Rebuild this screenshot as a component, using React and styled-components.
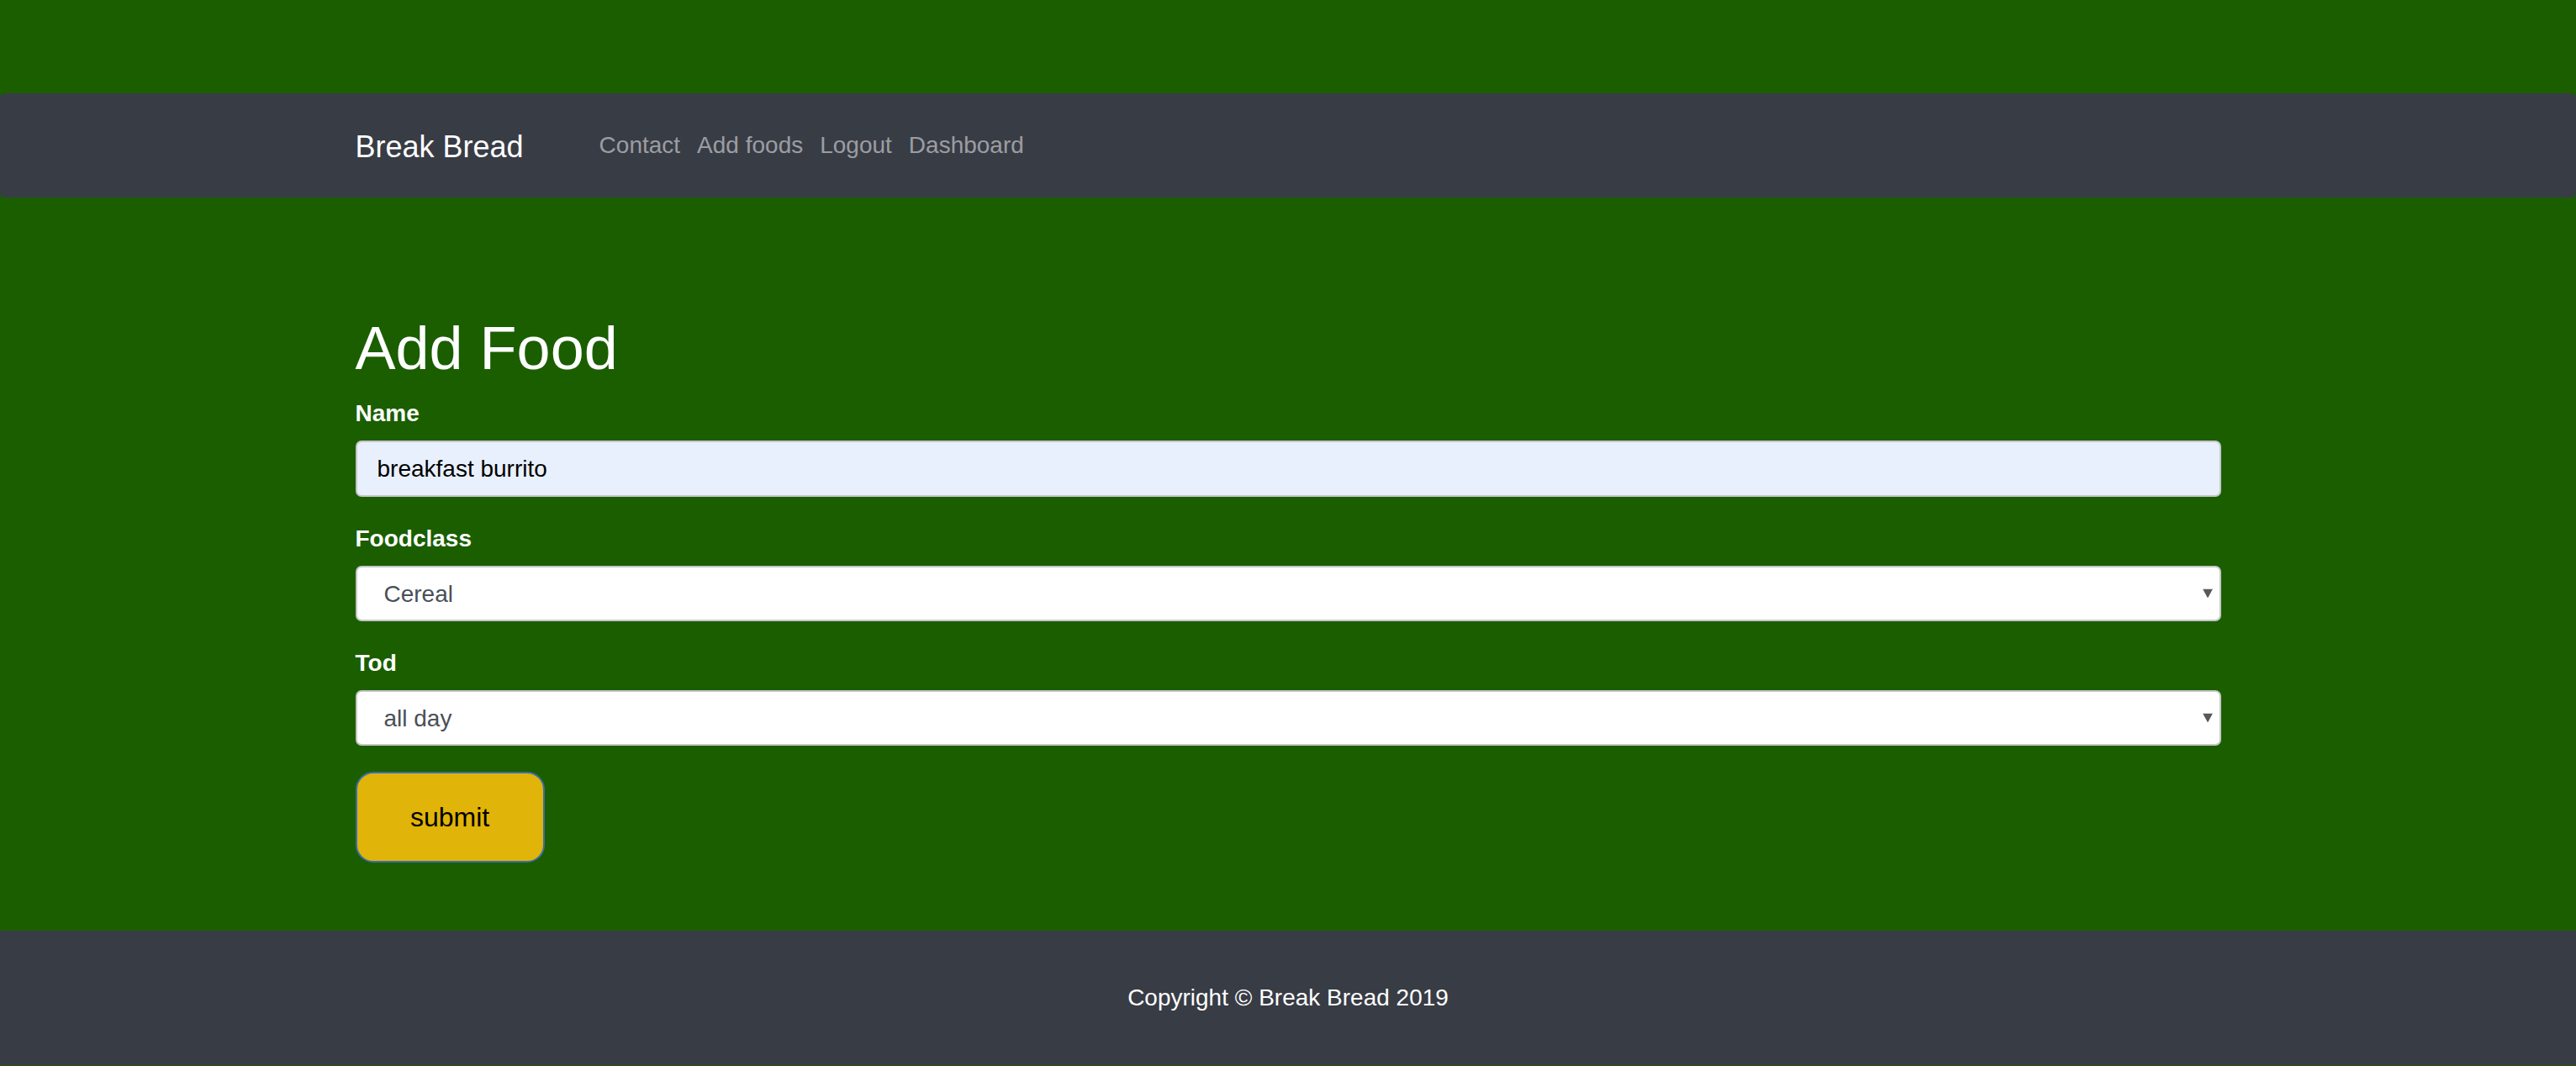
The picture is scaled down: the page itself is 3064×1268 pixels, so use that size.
import React, { useState } from "react";
import styled, { createGlobalStyle } from "styled-components";

const GlobalStyle = createGlobalStyle`
  html, body {
    margin: 0;
    padding: 0;
    background-color: #1a5e00;
    font-family: "Liberation Sans", Arial, sans-serif;
    font-size: 28px;
    line-height: 1.5;
    color: #fff;
  }
  * {
    box-sizing: border-box;
  }
`;

const Container = styled.div`
  width: 2219px;
  margin: 0 auto;
`;

const Navbar = styled.nav`
  margin-top: 111px;
  height: 124px;
  background-color: #383c45;
  border-radius: 6px;
  display: flex;
  align-items: center;
`;

const NavInner = styled(Container)`
  display: flex;
  align-items: center;
`;

const Brand = styled.a`
  font-size: 36px;
  color: #fff;
  text-decoration: none;
  margin-right: 90px;
  margin-top: 3px;
`;

const NavLinks = styled.div`
  display: flex;
  gap: 20px;
`;

const NavLink = styled.a`
  font-size: 28px;
  color: rgba(255, 255, 255, 0.5);
  text-decoration: none;
`;

const Main = styled.main`
  padding: 136px 0 81px;
`;

const Title = styled.h1`
  font-size: 72px;
  font-weight: 400;
  line-height: 1.2;
  margin: 0 0 14px;
`;

const FormGroup = styled.div`
  margin-bottom: 29px;
`;

const Label = styled.label`
  display: block;
  font-weight: 700;
  margin-bottom: 11px;
`;

const TextInput = styled.input`
  display: block;
  width: 100%;
  height: 67px;
  padding: 0 24px;
  font-family: inherit;
  font-size: 28px;
  color: #000;
  background-color: #e8f0fe;
  border: 2px solid #c6c6c6;
  border-radius: 7px;
  outline: none;
`;

const SelectWrap = styled.div`
  position: relative;
`;

const Select = styled.select`
  display: block;
  width: 100%;
  height: 66px;
  padding: 0 32px;
  font-family: inherit;
  font-size: 28px;
  color: #495057;
  background-color: #fff;
  border: 2px solid #c6c6c6;
  border-radius: 7px;
  appearance: none;
  -webkit-appearance: none;
  outline: none;
`;

const Arrow = styled.svg`
  position: absolute;
  right: 10px;
  top: 50%;
  transform: translateY(-50%);
  pointer-events: none;
`;

const SubmitButton = styled.button`
  margin-top: 2px;
  width: 225px;
  height: 108px;
  font-family: inherit;
  font-size: 32px;
  color: #000;
  background-color: #e0b408;
  border: 2px solid #3c6ea8;
  border-radius: 21px;
  cursor: pointer;
`;

const Footer = styled.footer`
  height: 160px;
  background-color: #383c45;
  display: flex;
  align-items: center;
  justify-content: center;
  font-size: 28px;
  color: #fff;
`;

const SelectField = ({ value, options, onChange }) => (
  <SelectWrap>
    <Select value={value} onChange={e => onChange(e.target.value)}>
      {options.map(opt => (
        <option key={opt}>{opt}</option>
      ))}
    </Select>
    <Arrow width="12" height="11" viewBox="0 0 12 11">
      <path d="M0 0 H12 L6 11 Z" fill="#595959" />
    </Arrow>
  </SelectWrap>
);

const App = () => {
  const [name, setName] = useState("breakfast burrito");
  const [foodclass, setFoodclass] = useState("Cereal");
  const [tod, setTod] = useState("all day");

  return (
    <>
      <GlobalStyle />
      <Navbar>
        <NavInner>
          <Brand href="#">Break Bread</Brand>
          <NavLinks>
            <NavLink href="#">Contact</NavLink>
            <NavLink href="#">Add foods</NavLink>
            <NavLink href="#">Logout</NavLink>
            <NavLink href="#">Dashboard</NavLink>
          </NavLinks>
        </NavInner>
      </Navbar>
      <Main>
        <Container>
          <Title>Add Food</Title>
          <form onSubmit={e => e.preventDefault()}>
            <FormGroup>
              <Label>Name</Label>
              <TextInput value={name} onChange={e => setName(e.target.value)} />
            </FormGroup>
            <FormGroup>
              <Label>Foodclass</Label>
              <SelectField
                value={foodclass}
                options={["Cereal", "Fruit", "Vegetable", "Meat", "Dairy"]}
                onChange={setFoodclass}
              />
            </FormGroup>
            <FormGroup>
              <Label>Tod</Label>
              <SelectField
                value={tod}
                options={["all day", "breakfast", "lunch", "dinner"]}
                onChange={setTod}
              />
            </FormGroup>
            <SubmitButton type="submit">submit</SubmitButton>
          </form>
        </Container>
      </Main>
      <Footer>Copyright © Break Bread 2019</Footer>
    </>
  );
};

export default App;
